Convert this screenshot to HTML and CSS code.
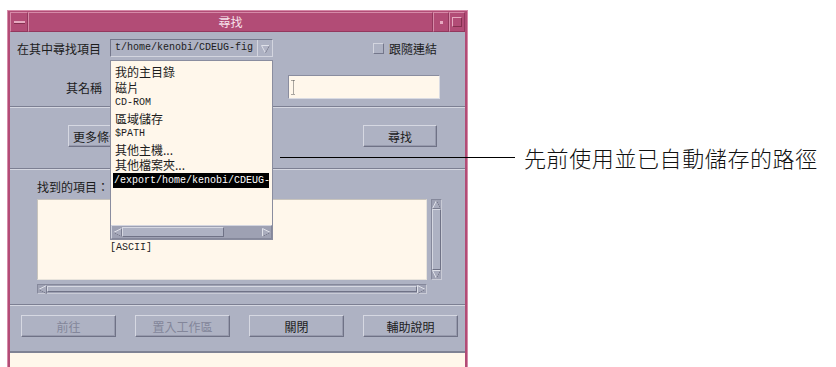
FILE: index.html
```html
<!DOCTYPE html>
<html lang="zh-TW">
    <head>
        <meta charset="UTF-8">
        <title>尋找</title>
        <link rel="stylesheet" href="styles.css">
    </head>
    <body>
        <div class="window">
            <div class="titlebar">
                <span class="wm-btn"><span class="wm-bar"></span></span>
                <span class="title">尋找</span>
                <span class="wm-btn"><span class="wm-dot"></span></span>
                <span class="wm-btn"><span class="wm-box"></span></span>
            </div>
            <div class="panel">
                <div class="section top">
                    <div class="row row-find">
                        <span class="label-lead">在其中尋找項目</span>
                        <div class="combo">
                            <span class="combo-text">t/home/kenobi/CDEUG-fig</span>
                            <span class="combo-arrow">
                                <svg width="11" height="11" viewBox="0 0 11 11"><path d="M1.5 2.5 H9.5 L5.5 10 Z" fill="#b1b4c5" stroke="#dfe1e9"/><path d="M9.5 2.5 L5.5 10" fill="none" stroke="#7a7d90"/></svg>
                            </span>
                        </div>
                        <label class="check"><span class="check-box"></span>跟隨連結</label>
                    </div>
                    <div class="row row-name">
                        <span class="label-name">其名稱</span>
                        <div class="option"></div>
                        <div class="field">
                            <svg class="ibeam" width="5" height="15" viewBox="0 0 5 15"><path d="M0.5 0.5 H4.5 M2.5 0.5 V14.5 M0.5 14.5 H4.5" fill="none" stroke="#555" stroke-dasharray="1 1"/></svg>
                        </div>
                    </div>
                </div>
                <div class="sep"></div>
                <div class="section mid">
                    <button class="btn btn-more">更多條件...</button>
                    <button class="btn btn-find">尋找</button>
                </div>
                <div class="sep"></div>
                <div class="section results">
                    <div class="results-label">找到的項目：</div>
                    <div class="results-grid">
                        <div class="textarea"><div class="ascii">[ASCII]</div></div>
                        <div class="vscroll">
                            <span class="arrow"><svg width="9" height="9" viewBox="0 0 9 9"><path d="M4.5 0.5 L8.5 8.5 H0.5 Z" fill="#a9acbd" stroke="#dfe1e9"/><path d="M0.5 8.5 H8.5 L4.5 0.5" fill="none" stroke="#7a7d90"/></svg></span>
                            <span class="thumb"></span>
                            <span class="arrow"><svg width="9" height="9" viewBox="0 0 9 9"><path d="M0.5 0.5 H8.5 L4.5 8.5 Z" fill="#a9acbd" stroke="#dfe1e9"/><path d="M8.5 0.5 L4.5 8.5" fill="none" stroke="#7a7d90"/></svg></span>
                        </div>
                        <div class="hscroll">
                            <span class="arrow"><svg width="9" height="9" viewBox="0 0 9 9"><path d="M0.5 4.5 L8.5 0.5 V8.5 Z" fill="#a9acbd" stroke="#dfe1e9"/><path d="M8.5 0.5 V8.5 L0.5 4.5" fill="none" stroke="#7a7d90"/></svg></span>
                            <span class="thumb"></span>
                            <span class="arrow"><svg width="9" height="9" viewBox="0 0 9 9"><path d="M8.5 4.5 L0.5 0.5 V8.5 Z" fill="#a9acbd" stroke="#dfe1e9"/><path d="M0.5 8.5 L8.5 4.5" fill="none" stroke="#7a7d90"/></svg></span>
                        </div>
                    </div>
                </div>
                <div class="sep"></div>
                <div class="section actions">
                    <button class="btn btn-off">前往</button>
                    <button class="btn btn-off">置入工作區</button>
                    <button class="btn">關閉</button>
                    <button class="btn">輔助說明</button>
                </div>

                <div class="dropdown">
                    <ul class="dropdown-items">
                        <li>我的主目錄</li>
                        <li>磁片</li>
                        <li class="mono">CD-ROM</li>
                        <li>區域儲存</li>
                        <li class="mono">$PATH</li>
                        <li>其他主機...</li>
                        <li>其他檔案夾...</li>
                        <li class="mono selected">/export/home/kenobi/CDEUG-fig</li>
                    </ul>
                    <div class="hscroll list-scroll">
                        <span class="arrow"><svg width="9" height="9" viewBox="0 0 9 9"><path d="M0.5 4.5 L8.5 0.5 V8.5 Z" fill="#a9acbd" stroke="#dfe1e9"/><path d="M8.5 0.5 V8.5 L0.5 4.5" fill="none" stroke="#7a7d90"/></svg></span>
                        <span class="thumb"></span>
                        <span class="track"></span>
                        <span class="arrow"><svg width="9" height="9" viewBox="0 0 9 9"><path d="M8.5 4.5 L0.5 0.5 V8.5 Z" fill="#a9acbd" stroke="#dfe1e9"/><path d="M0.5 8.5 L8.5 4.5" fill="none" stroke="#7a7d90"/></svg></span>
                    </div>
                </div>
            </div>
            <div class="below"></div>
        </div>

        <div class="callout">
            <span class="callout-line"></span>
            <span class="callout-text">先前使用並已自動儲存的路徑</span>
        </div>
    </body>
</html>
```

FILE: styles.css
```css
* {
    box-sizing: border-box;
}

body, ul {
    margin: 0;
    padding: 0;
}

body {
    position: relative;
    height: 367px;
    overflow: hidden;
    background: #fff;
    color: #1c1c1c;
    font-family: "Noto Sans CJK TC", "Noto Sans CJK SC", sans-serif;
    font-size: 12px;
}

ul {
    list-style: none;
}

.window {
    width: 461px;
    margin: 10px 0 0 7px;
    padding: 1px 2px 0;
    border: 1px solid #d68aa8;
    border-bottom: 0;
    background: #b24c76;
}

.titlebar {
    display: flex;
    height: 20px;
}

.wm-btn {
    display: flex;
    align-items: center;
    justify-content: center;
    width: 16px;
    border: 1px solid #d68aa8;
    border-right-color: #93385e;
    border-bottom-color: #93385e;
}

.wm-btn:first-child {
    width: 18px;
}

.wm-bar {
    width: 11px;
    height: 3px;
    background: #e6a9c0;
    border-bottom: 1px solid #84304f;
}

.wm-dot {
    width: 3px;
    height: 3px;
    background: #e6a9c0;
}

.wm-box {
    width: 10px;
    height: 10px;
    border: 1px solid #e6a9c0;
    border-right-color: #84304f;
    border-bottom-color: #84304f;
}

.title {
    flex: 1;
    border: 1px solid #d68aa8;
    border-right-color: #93385e;
    border-bottom-color: #93385e;
    color: #f6e2ea;
    line-height: 18px;
    text-align: center;
}

.panel {
    position: relative;
    height: 319px;
    background: #aeb2c3;
}

.sep {
    height: 2px;
    border-top: 1px solid #7c7f92;
    border-bottom: 1px solid #d5d7e1;
}

.row {
    display: flex;
    align-items: center;
}

.top {
    padding: 7px 0 7px 7px;
}

.row-find {
    height: 18px;
}

.label-lead {
    width: 93px;
}

.combo {
    display: flex;
    width: 163px;
    height: 18px;
    border: 1px solid;
    border-color: #74778b #d3d5df #d3d5df #74778b;
}

.combo-text {
    flex: 1;
    padding-left: 4px;
    font-family: "Liberation Mono", monospace;
    font-size: 10px;
    line-height: 16px;
    white-space: nowrap;
    overflow: hidden;
}

.combo-arrow {
    display: flex;
    align-items: center;
    justify-content: center;
    width: 15px;
    border-left: 1px solid #d3d5df;
}

.check {
    display: flex;
    align-items: center;
    gap: 5px;
    margin-left: 100px;
}

.check-box {
    width: 11px;
    height: 11px;
    border: 1px solid;
    border-color: #d3d5df #74778b #74778b #d3d5df;
}

.row-name {
    height: 24px;
    margin-top: 18px;
}

.label-name {
    width: 85px;
    margin-right: 8px;
    text-align: right;
}

.option {
    width: 163px;
    height: 20px;
}

.field {
    display: flex;
    align-items: center;
    width: 152px;
    height: 24px;
    margin-left: 15px;
    padding-left: 2px;
    border: 1px solid;
    border-color: #8a8d9f #d9dbe3 #d9dbe3 #8a8d9f;
    background: #fff7eb;
}

.mid {
    display: flex;
    padding: 17px 0 21px 58px;
}

.btn {
    height: 22px;
    padding: 0;
    border: 1px solid;
    border-color: #d6d8e2 #6f7286 #6f7286 #d6d8e2;
    box-shadow: inset -1px -1px 0 #979aad;
    background: #aeb2c3;
    color: #1c1c1c;
    font: inherit;
    line-height: 19px;
    text-align: center;
}

.btn-more {
    width: 100px;
    padding-left: 4px;
    text-align: left;
}

.btn-find {
    width: 74px;
    margin-left: 195px;
}

.btn-off {
    color: #83869a;
}

.results {
    padding: 10px 0 10px 27px;
}

.results-label {
    height: 14px;
    margin-bottom: 5px;
    line-height: 14px;
}

.results-grid {
    display: grid;
    grid-template-columns: 390px 11px;
    grid-template-rows: 81px 10px;
    gap: 4px;
}

.textarea {
    border: 1px solid;
    border-color: #c8c4bd #e8e4dc #e8e4dc #c8c4bd;
    background: #fff7eb;
}

.ascii {
    margin-top: 41px;
    padding-left: 72px;
    font-family: "Liberation Mono", monospace;
    font-size: 10px;
    line-height: 14px;
}

.vscroll, .hscroll {
    display: flex;
    background: #9ea1b3;
    border: 1px solid;
    border-color: #85889b #c9cbd6 #c9cbd6 #85889b;
}

.vscroll {
    flex-direction: column;
}

.arrow {
    display: flex;
    align-items: center;
    justify-content: center;
    flex: none;
    width: 9px;
    height: 9px;
}

.vscroll .arrow {
    width: 100%;
}

.hscroll .arrow {
    height: 100%;
}

.thumb {
    flex: 1;
    margin: 1px 0;
    border: 1px solid;
    border-color: #d6d8e2 #6f7286 #6f7286 #d6d8e2;
    background: #aeb2c3;
}

.vscroll .thumb {
    margin: 0;
}

.actions {
    display: flex;
    gap: 19px;
    padding: 9px 0 14px 11px;
}

.actions .btn {
    width: 95px;
}

.below {
    height: 20px;
    border-top: 2px solid #7f8294;
    background: #fff7eb;
}

.dropdown {
    position: absolute;
    left: 100px;
    top: 28px;
    display: flex;
    flex-direction: column;
    width: 163px;
    height: 180px;
    border: 1px solid #8a8d9f;
    background: #fff7eb;
}

.dropdown-items {
    flex: 1;
    padding: 3px 3px 0 4px;
    overflow: hidden;
    line-height: 15.5px;
}

.dropdown-items li {
    white-space: nowrap;
}

.mono {
    font-family: "Liberation Mono", monospace;
    font-size: 10px;
}

.selected {
    margin-left: -2px;
    padding-left: 1px;
    overflow: hidden;
    background: #000;
    color: #fff;
}

.list-scroll {
    height: 14px;
    border-color: #d3d5df #85889b #85889b #d3d5df;
}

.list-scroll .arrow {
    width: 10px;
}

.list-scroll .thumb {
    flex: none;
    width: 102px;
}

.track {
    flex: 1;
}

.callout {
    position: absolute;
    left: 280px;
    top: 142px;
    display: flex;
    align-items: center;
    height: 30px;
}

.callout-line {
    width: 235px;
    border-top: 1px solid #000;
}

.callout-text {
    margin-left: 9px;
    color: #111;
    font-size: 22px;
    font-weight: 300;
    letter-spacing: 0.6px;
}
```
